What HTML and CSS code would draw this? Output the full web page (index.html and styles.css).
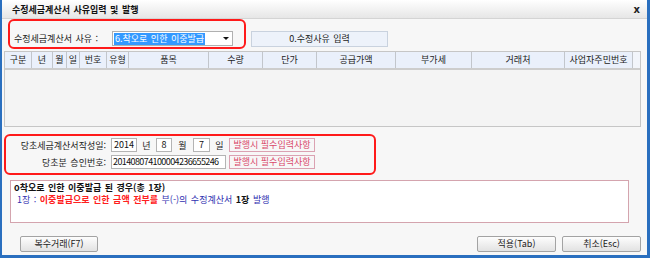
FILE: index.html
```html
<!DOCTYPE html>
<html lang="ko">
<head>
<meta charset="utf-8">
<link rel="stylesheet" href="styles.css">
</head>
<body>
<div class="window">
  <div class="titlebar">
    <span class="title">수정세금계산서 사유입력 및 발행</span>
    <span class="close">x</span>
  </div>
  <div class="row1">
    <div class="redbox reason">
      <span class="label">수정세금계산서 사유 :</span>
      <div class="combo"><span class="sel">6.착오로 인한 이중발급</span><span class="arrow"></span></div>
    </div>
    <div class="reasonbtn">0.수정사유 입력</div>
  </div>
  <div class="grid">
    <div class="ghead">
      <div class="gc c1">구분</div>
      <div class="gc c2">년</div>
      <div class="gc c3">월</div>
      <div class="gc c4">일</div>
      <div class="gc c5">번호</div>
      <div class="gc c6">유형</div>
      <div class="gc c7">품목</div>
      <div class="gc c8">수량</div>
      <div class="gc c9">단가</div>
      <div class="gc c10">공급가액</div>
      <div class="gc c11">부가세</div>
      <div class="gc c12">거래처</div>
      <div class="gc c13">사업자주민번호</div>
      <div class="gc cfill"></div>
    </div>
  </div>
  <div class="redbox orig">
    <div class="frow">
      <span class="flabel">당초세금계산서작성일:</span>
      <span class="inp w26">2014</span>
      <span class="unit u19">년</span>
      <span class="inp w16">8</span>
      <span class="unit u21">월</span>
      <span class="inp w17">7</span>
      <span class="unit u19">일</span>
      <span class="note">발행시 필수입력사항</span>
    </div>
    <div class="frow">
      <span class="flabel">당초분 승인번호:</span>
      <span class="inp w115 num">201408074100004236655246</span>
      <span class="note ml3">발행시 필수입력사항</span>
    </div>
  </div>
  <div class="msg">
    <div class="m1">o착오로 인한 이중발급 된 경우(총 1장)</div>
    <div class="m2"><span class="blue">1장 : </span><span class="red">이중발급으로 인한 금액 전부를</span> <span class="blue">부(-)의 수정계산서</span> <span class="blk">1장</span> <span class="blue">발행</span></div>
  </div>
  <div class="btnrow">
    <div class="btn bmulti">복수거래(F7)</div>
    <div class="btn bapply">적용(Tab)</div>
    <div class="btn bcancel">취소(Esc)</div>
  </div>
</div>
</body>
</html>
```

FILE: styles.css
```css
* { box-sizing: border-box; margin: 0; padding: 0; }
html, body { width: 650px; height: 258px; overflow: hidden; }
body {
  font-family: "Noto Sans CJK KR", "Noto Sans", sans-serif;
  font-size: 9px;
  line-height: 11px;
  color: #222;
  background: #ffffff;
  word-spacing: 1px;
}
.window {
  width: 650px;
  height: 258px;
  border-left: 2px solid #2a6fbf;
  border-right: 3px solid #2a6fbf;
  border-bottom: 3px solid #2a6fbf;
  background: #f7f7f7;
  display: flex;
  flex-direction: column;
}
.titlebar {
  height: 19px;
  flex: none;
  display: flex;
  align-items: center;
  justify-content: space-between;
  padding: 0 7px 0 10px;
  background: linear-gradient(#ffffff, #e6e6e6);
  border-bottom: 1px solid #d4d4d4;
}
.title { font-weight: bold; color: #111; }
.close { font-weight: bold; font-family: "DejaVu Sans", sans-serif; font-size: 10px; color: #222; }

.redbox { border: 2px solid #ff1a1a; border-radius: 6px; }

.row1 { display: flex; align-items: flex-end; margin-left: 6px; height: 30px; flex: none; }
.reason {
  width: 238px;
  height: 30px;
  display: flex;
  align-items: flex-end;
  padding: 0 0 1px 4px;
}
.label { width: 98px; line-height: 15px; color: #222; }
.combo {
  width: 121px;
  height: 15px;
  background: #fff;
  border: 1px solid #b0b0b0;
  display: flex;
  align-items: center;
  padding-left: 1px;
}
.sel { background: #3399ff; color: #fff; line-height: 12px; padding: 0 1px; }
.arrow {
  margin-left: auto;
  margin-right: 3px;
  width: 0; height: 0;
  border-left: 3px solid transparent;
  border-right: 3px solid transparent;
  border-top: 3px solid #111;
}
.reasonbtn {
  margin-left: 5px;
  margin-bottom: 2px;
  width: 137px;
  height: 16px;
  background: #edf2fa;
  border: 1px solid #c9d2de;
  text-align: center;
  line-height: 14px;
  color: #222;
}

.grid {
  flex: none;
  margin: 2px 6px 0 2px;
  height: 76px;
  border: 1px solid #c6c6c6;
  background: #f4f4f4;
}
.ghead {
  display: flex;
  height: 18px;
  border-bottom: 2px solid #cdcdcd;
  background: #f0f0f0;
}
.gc {
  flex: none;
  height: 16px;
  line-height: 16px;
  text-align: center;
  background: #eaf0fb;
  border-right: 1px solid #c2c6cc;
  color: #222;
}
.c1 { width: 27px; }
.c2 { width: 21px; }
.c3 { width: 14px; }
.c4 { width: 13px; }
.c5 { width: 27px; }
.c6 { width: 22px; }
.c7 { width: 80px; }
.c8 { width: 54px; }
.c9 { width: 54px; }
.c10 { width: 79px; }
.c11 { width: 76px; }
.c12 { width: 93px; }
.c13 { width: 68px; }
.cfill { flex: 1; border-right: none; background: #f2f5fb; }

.orig {
  flex: none;
  margin: 7px 0 0 2px;
  width: 372px;
  height: 41px;
  padding-top: 2px;
  display: flex;
  flex-direction: column;
  gap: 3px;
}
.frow { display: flex; align-items: center; height: 14px; }
.flabel { width: 101px; margin-right: 4px; text-align: right; padding-right: 1px; color: #222; }
.inp {
  flex: none;
  height: 14px;
  background: #fff;
  border: 1px solid #b4b4b4;
  line-height: 12px;
  text-align: center;
  color: #111;
  overflow: hidden;
  white-space: nowrap;
}
.w26 { width: 26px; }
.w16 { width: 16px; }
.w17 { width: 17px; }
.w115 { width: 115px; }
.num { text-align: left; padding-left: 1px; letter-spacing: -0.6px; }
.unit { flex: none; text-align: center; color: #222; }
.u19 { width: 19px; }
.u21 { width: 21px; }
.note {
  flex: none;
  width: 86px;
  height: 14px;
  border: 1px solid #dba2b2;
  color: #d9476a;
  text-align: center;
  line-height: 12px;
  word-spacing: 0;
}
.ml3 { margin-left: 3px; }

.msg {
  flex: none;
  margin: 5px 0 0 8px;
  width: 619px;
  height: 43px;
  background: #fff;
  border: 1px solid #d4a4ae;
  padding: 1px 3px;
  line-height: 12px;
}
.m1 { font-weight: bold; color: #111; }
.m2 { padding-left: 3px; }
.blue { color: #3030b0; }
.red { color: #ff2020; font-weight: bold; }
.blk { color: #111; font-weight: bold; }

.btnrow {
  flex: none;
  margin-top: 13px;
  height: 16px;
  display: flex;
  padding: 0 6px 0 18px;
}
.btn {
  height: 16px;
  border: 1px solid #a3a3a3;
  border-radius: 2px;
  background: linear-gradient(#fdfdfd, #e2e2e2);
  text-align: center;
  line-height: 14px;
  color: #222;
}
.bmulti { width: 78px; }
.bapply { width: 79px; margin-left: auto; }
.bcancel { width: 79px; margin-left: 6px; }
```
